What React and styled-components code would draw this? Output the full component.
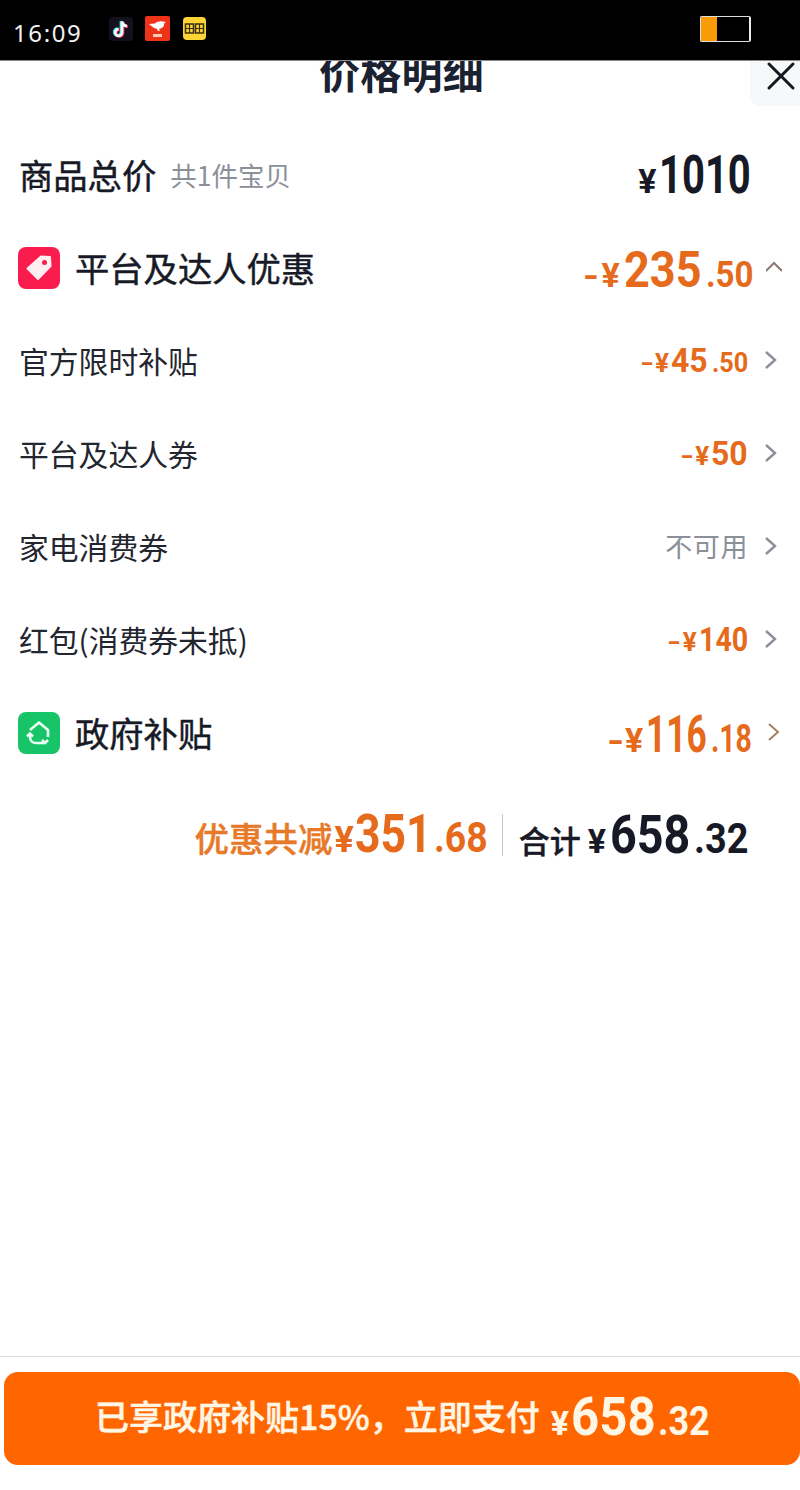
import React from "react";
import styled, { createGlobalStyle } from "styled-components";

const CJK = '"Noto Sans CJK SC", "Noto Sans", sans-serif';
const NUM = 'Roboto, "Liberation Sans", sans-serif';
const ORANGE = "#e56a1c";
const INK = "#171a26";

const Global = createGlobalStyle`
  html, body { margin: 0; padding: 0; background: #fff; }
  * { box-sizing: border-box; }
`;
const Page = styled.div`
  width: 800px; height: 1490px; display: flex; flex-direction: column;
  overflow: hidden; background: #fff; font-family: ${CJK}; color: ${INK};
`;
const StatusBar = styled.header`
  position: relative; z-index: 2; flex: none;
  height: 61px; background: #000; border-bottom: 1px solid #8a8a8a;
  display: flex; align-items: center; padding: 0 49px 1px 13px; color: #f2f2f2;
`;
const Time = styled.span`
  font: 400 24px "Noto Sans", sans-serif; letter-spacing: 1.6px; width: 96px; padding-top: 5px;
`;
const Apps = styled.div`
  display: flex; align-items: center; gap: 12px; margin-top: -2px;
`;
const BatteryBox = styled.div`
  margin-left: auto; width: 51px; height: 26px; border: 1px solid #ddd;
  border-right: 2px solid #eee; border-radius: 2px; margin-top: -2px; background: #000;
`;
const BatteryFill = styled.div`
  width: 16px; height: 100%; background: #fb9a08;
`;
const Title = styled.h1`
  flex: none; margin: -19px 0 0; height: 58px; text-align: center; font-size: 41px; font-weight: 700;
  line-height: 58px; color: #1a2130; padding-left: 3px; letter-spacing: .3px;
`;
const Close = styled.button`
  position: absolute; right: 0; top: 61px; width: 50px; height: 45px; border: 0; padding: 0;
  background: #f6f8fa; border-bottom-left-radius: 10px;
  display: flex; justify-content: flex-end; padding-right: 4px;
`;
const List = styled.main`
  padding: 28px 0 0; display: flex; flex-direction: column;
`;
const Row = styled.div`
  height: ${p => p.$h || 93}px; display: flex; align-items: center; padding: 0 ${p => p.$pr || 21}px 0 ${p => p.$pl || 19}px;
`;
const Head = styled.span`
  font-size: 34.3px; font-weight: 400; -webkit-text-stroke: 0.45px ${INK}; color: ${INK};
`;
const Note = styled.span`
  font-size: 26.5px; color: #8b8f98; margin-left: 14px;
`;
const Label = styled.span`
  font-size: 29.8px; color: #23262f;
`;
const Right = styled.div`
  margin-left: auto; display: flex; align-items: baseline; padding-top: ${p => p.$pt || 0}px;
  color: ${p => p.$c || ORANGE};
`;
const BigText = styled.span`
  display: inline-block; transform-origin: left center;
  transform: scaleX(${p => p.$k});
  margin-left: ${p => p.$g}px; margin-right: ${p => p.$mr}px;
  font-size: ${p => p.$s}px; line-height: 1; font-family: ${NUM}; font-weight: 700;
`;
const Unavail = styled.span`
  margin-left: auto; font-size: 27px; color: #8b8f98; letter-spacing: 0.6px;
`;
const Arrow = styled.svg`
  flex: none; margin-left: ${p => p.$ml || 15}px; width: 16px; height: 24px;
`;
const IconTile = styled.div`
  width: 42px; height: 42px; border-radius: 8px; background: ${p => p.$bg}; margin: 2px 15px 0 0;
  display: flex; align-items: center; justify-content: center; flex: none;
`;
const Summary = styled.div`
  height: 116px; display: flex; align-items: center; justify-content: flex-end; padding: 0 51px 2px 0;
`;
const SummaryLabel = styled.span`
  font-size: ${p => p.$s}px; font-weight: 500; color: ${p => p.$c};
  -webkit-text-stroke: 0.4px ${p => p.$c};
`;
const Group = styled.div`
  display: flex; align-items: baseline; color: ${p => p.$c};
`;
const Rule = styled.div`
  width: 1px; height: 42px; background: #c9c9c9; margin: 0 16px 0 14px;
`;
const Spacer = styled.div` flex: 1; `;
const Footer = styled.footer`
  flex: none; height: 134px; border-top: 1px solid #dcdcdc; padding: 15px 0 0 4px;
`;
const PayButton = styled.button`
  width: 796px; height: 93px; border: 0; border-radius: 14px; background: #ff6600;
  color: #fff6e6; display: flex; align-items: baseline; justify-content: flex-start; padding: 18px 0 0 91px;
  font-family: ${CJK}; font-size: 34px; font-weight: 500;
`;
const PayLabel = styled.span`
  transform: translateY(-5px); -webkit-text-stroke: 0.5px #fff6e6;
`;

const WIDTH = { ".": 0.27, "¥": 0.55, "-": 0.3 };
const emWidth = str => [...str].reduce((sum, c) => sum + (WIDTH[c] ?? 0.563), 0);

const Big = ({ s, k = 1, g = 0, children }) => (
  <BigText $s={s} $k={k} $g={g} $mr={-(1 - k) * emWidth(children) * s}>{children}</BigText>
);

const Chevron = ({ dir = "right", ml, color = "#8b8f98", w = 2.4 }) => (
  <Arrow $ml={ml} viewBox="0 0 16 24" fill="none" stroke={color} strokeWidth={w}>
    {dir === "right" ? <path d="M3 4l9 8-9 8" /> : <path d="M0 16l8-8 8 8" />}
  </Arrow>
);

const SmallMoney = ({ main, k, dec }) => (
  <Right>
    <Big s={26} k={1.4}>-</Big>
    <Big s={26} g={2}>¥</Big>
    <Big s={34} k={k} g={2}>{main}</Big>
    {dec && <Big s={28} k={0.9} g={4}>{"." + dec}</Big>}
  </Right>
);

export default function App() {
  return (
    <Page>
      <Global />
      <StatusBar>
        <Time>16:09</Time>
        <Apps>
          <svg width="24" height="24" viewBox="0 0 24 24">
            <rect width="24" height="24" rx="4" fill="#15101d" />
            <path d="M12 4v11a3.400 3.400 0 1 1-3.400-3.400M12 4c.4 2.800 2 4.300 5 4.600" fill="none" stroke="#25e0e8" strokeWidth="2.800" />
            <path d="M14 5v11a3.400 3.400 0 1 1-3.400-3.400M14 5c.4 2.800 2 4.300 5 4.600" fill="none" stroke="#f0305a" strokeWidth="2.800" />
            <path d="M13 4.500v11a3.400 3.400 0 1 1-3.400-3.400M13 4.500c.4 2.800 2 4.300 5 4.600" fill="none" stroke="#f7f7f7" strokeWidth="2.800" />
          </svg>
          <svg width="25" height="25" viewBox="0 0 25 25">
            <rect width="25" height="25" rx="2" fill="#ef3318" />
            <path d="M4 8l6-.5c2-2 5-2.500 8-2l3 .5-2 1.500c.5 3-2 5-5 5.500l1 2h-2l-1-2c-3-.5-5-2.500-8-5z" fill="#fff" />
            <rect x="8" y="18" width="9" height="3" fill="#ffc9b8" />
          </svg>
          <svg width="23" height="23" viewBox="0 0 23 23" style={{ marginLeft: 1 }}>
            <rect width="23" height="23" rx="4" fill="#fcd535" />
            <rect x="2.500" y="7" width="8" height="9" fill="none" stroke="#3a2f10" strokeWidth="1.500" />
            <rect x="12.500" y="7" width="8" height="9" fill="none" stroke="#3a2f10" strokeWidth="1.500" />
            <path d="M2.500 11.500h8M6.500 7v9M12.500 11.500h8M16.500 7v9" stroke="#3a2f10" strokeWidth="1.200" />
          </svg>
        </Apps>
        <BatteryBox><BatteryFill /></BatteryBox>
      </StatusBar>
      <Title>价格明细</Title>
      <Close aria-label="关闭">
        <svg width="30" height="30" viewBox="0 0 30 30" fill="none" stroke="#15171f" strokeWidth="3" strokeLinecap="round">
          <path d="M3 3l24 24M27 3L3 27" />
        </svg>
      </Close>
      <List>
        <Row $h={92} $pl={19} $pr={49}>
          <Head>商品总价</Head><Note>共1件宝贝</Note>
          <Right $c={INK} $pt={3}><Big s={34}>¥</Big><Big s={53} k={0.755} g={2}>1010</Big></Right>
        </Row>
        <Row $pl={18} $pr={18}>
          <IconTile $bg="#fb1c4e">
            <svg width="30" height="30" viewBox="0 0 30 30">
              <path d="M17 3.500l9 0.500 .5 9L14 26 3.500 15.500z" fill="#ffeff0" stroke="#ffeff0" strokeWidth="2" strokeLinejoin="round" />
              <circle cx="20.500" cy="9.500" r="2.500" fill="#fb1c4e" />
            </svg>
          </IconTile>
          <Head>平台及达人优惠</Head>
          <Right $pt={6}>
            <Big s={34} k={1.2}>-</Big><Big s={34} g={3}>¥</Big>
            <Big s={50} k={0.9} g={4}>235</Big><Big s={36} k={0.92} g={5}>.50</Big>
          </Right>
          <Chevron dir="up" ml={12} color="#8a7a70" w={2} />
        </Row>
        <Row>
          <Label>官方限时补贴</Label>
          <SmallMoney main="45" k={0.94} dec="50" />
          <Chevron />
        </Row>
        <Row>
          <Label>平台及达人券</Label>
          <SmallMoney main="50" k={0.94} />
          <Chevron />
        </Row>
        <Row>
          <Label>家电消费券</Label>
          <Unavail>不可用</Unavail>
          <Chevron />
        </Row>
        <Row>
          <Label>红包(消费券未抵)</Label>
          <SmallMoney main="140" k={0.84} />
          <Chevron />
        </Row>
        <Row $pl={18} $pr={18}>
          <IconTile $bg="#18c468">
            <svg width="30" height="30" viewBox="0 0 30 30" fill="none" stroke="#eafff2" strokeWidth="2.600" strokeLinejoin="round">
              <path d="M6 12L15 4.500l9 7.500v7" />
              <path d="M6 16v3c0 4 3 6 6 6h9" />
              <path d="M3 18.500l3-3 3 3" />
              <path d="M24 22l-3 3-3-3" />
            </svg>
          </IconTile>
          <Head>政府补贴</Head>
          <Right $pt={6}>
            <Big s={34} k={1.3}>-</Big><Big s={34} g={2}>¥</Big>
            <Big s={52} k={0.68} g={3}>116</Big><Big s={38} k={0.75} g={3}>.18</Big>
          </Right>
          <Chevron ml={14} color="#a07a58" w={1.800} />
        </Row>
        <Summary>
          <Group $c={ORANGE}>
            <SummaryLabel $s={34.5} $c="#e67a28">优惠共减</SummaryLabel>
            <Big s={36} g={2}>¥</Big><Big s={53} k={0.84} g={1}>351</Big><Big s={42} k={0.89} g={2}>.68</Big>
          </Group>
          <Rule />
          <Group $c={INK}>
            <SummaryLabel $s={31} $c={INK}>合计</SummaryLabel>
            <Big s={34} g={7}>¥</Big><Big s={53} k={0.88} g={4}>658</Big><Big s={42} k={0.9} g={4}>.32</Big>
          </Group>
        </Summary>
      </List>
      <Spacer />
      <Footer>
        <PayButton>
          <PayLabel>已享政府补贴15%，立即支付</PayLabel><Big s={34} g={11}>¥</Big><Big s={54} k={0.91} g={2}>658</Big><Big s={40} k={0.9} g={2}>.32</Big>
        </PayButton>
      </Footer>
    </Page>
  );
}
